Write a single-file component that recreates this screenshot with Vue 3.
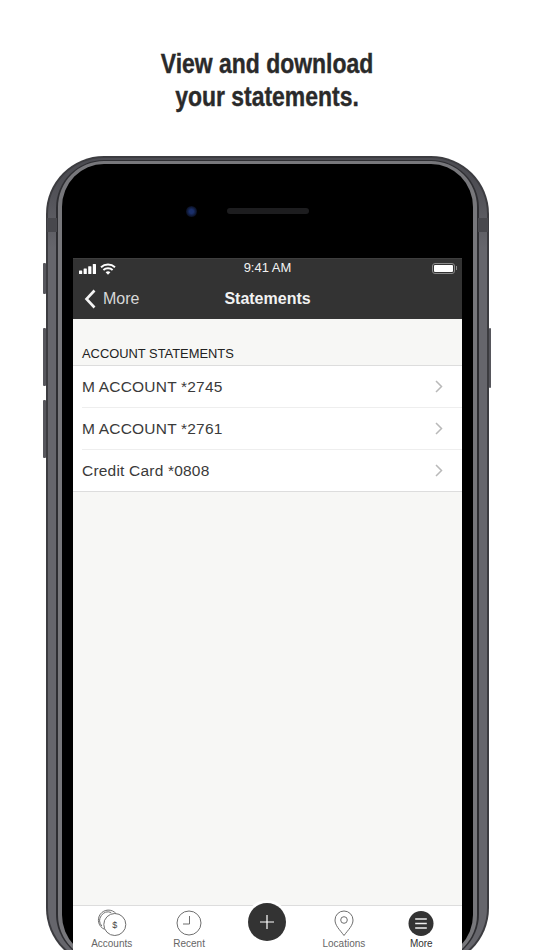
<script setup>
const rows = ['M ACCOUNT *2745', 'M ACCOUNT *2761', 'Credit Card *0808']
</script>

<template>
  <div class="page">
    <div class="title-wrap">
      <h1 class="title">View and download<br />your statements.</h1>
    </div>
    <div class="phone">
      <span class="side mute"></span>
      <span class="side volup"></span>
      <span class="side voldown"></span>
      <span class="side power"></span>
      <span class="antenna left"></span>
      <span class="antenna right"></span>
      <div class="band">
        <div class="groove">
          <div class="bezel">
            <div class="earpiece">
              <span class="camera"></span>
              <span class="speaker"></span>
            </div>
            <div class="screen">
              <div class="status">
                <div class="status-left">
                  <svg width="18" height="10" viewBox="0 0 18 10"><rect x="0" y="6.500" width="3.200" height="3.500" rx=".5" fill="#fff"/><rect x="4.600" y="4.500" width="3.200" height="5.500" rx=".5" fill="#fff"/><rect x="9.200" y="2.200" width="3.200" height="7.800" rx=".5" fill="#fff"/><rect x="13.800" y="0" width="3.200" height="10" rx=".5" fill="#fff"/></svg>
                  <svg width="16" height="12" viewBox="0 0 16 12" fill="none" stroke="#fff" stroke-width="2"><path d="M1 4.200C5 .6 11 .6 15 4.200"/><path d="M3.400 6.900C6 4.600 10 4.600 12.600 6.900"/><path d="M8 11.800 5.600 9.200C7 8 9 8 10.400 9.200Z" fill="#fff" stroke="none"/></svg>
                </div>
                <span class="clock">9:41 AM</span>
                <span class="battery"><i></i></span>
              </div>
              <div class="nav">
                <div class="back">
                  <svg width="12" height="20" viewBox="0 0 12 20" fill="none" stroke="#f4f4f4" stroke-width="2.600"><path d="M10.500 1.500 2.500 10l8 8.500"/></svg>
                  <span>More</span>
                </div>
                <span class="nav-title">Statements</span>
              </div>
              <div class="content">
                <div class="section">ACCOUNT STATEMENTS</div>
                <ul class="list">
                  <li v-for="row in rows" :key="row" class="row">
                    <span>{{ row }}</span>
                    <svg width="8" height="13" viewBox="0 0 8 13" fill="none" stroke="#b9b9b9" stroke-width="1.500"><path d="M1 1l5.500 5.500L1 12"/></svg>
                  </li>
                </ul>
              </div>
              <div class="tabs">
                <div class="tab">
                  <svg width="32" height="30" viewBox="0 0 32 30" fill="none" stroke="#6f6f6f" stroke-width="1"><path d="M8.500 20.300A10 10 0 1 1 20 4.600"/><path d="M5.800 17A8.500 8.500 0 0 1 15.200 3.500"/><circle cx="18.800" cy="15.500" r="11"/><text x="18.800" y="18.800" font-size="9" text-anchor="middle" fill="#444" stroke="none" font-family="Liberation Sans, sans-serif">$</text></svg>
                  <span>Accounts</span>
                </div>
                <div class="tab">
                  <svg width="30" height="30" viewBox="0 0 30 30" fill="none" stroke="#6f6f6f" stroke-width="1"><circle cx="15" cy="14" r="12"/><path d="M15.500 7v8H9"/></svg>
                  <span>Recent</span>
                </div>
                <div class="tab plus-slot">
                  <div class="plus">
                    <svg width="16" height="16" viewBox="0 0 16 16" stroke="#fff" stroke-width="1.200"><path d="M8 1v14M1 8h14"/></svg>
                  </div>
                </div>
                <div class="tab">
                  <svg width="30" height="30" viewBox="0 0 30 30" fill="none" stroke="#6f6f6f" stroke-width="1"><path d="M15 26.500C10.500 20.500 6 16.500 6 11a9 9 0 0 1 18 0C24 16.500 19.500 20.500 15 26.500Z"/><circle cx="15" cy="11" r="3.300"/></svg>
                  <span>Locations</span>
                </div>
                <div class="tab active">
                  <svg width="30" height="30" viewBox="0 0 30 30"><circle cx="15" cy="14.500" r="12.500" fill="#333"/><path d="M9.200 10h11.600M9.200 14.500h11.600M9.200 19h11.600" stroke="#eee" stroke-width="1.500"/></svg>
                  <span>More</span>
                </div>
              </div>
            </div>
          </div>
        </div>
      </div>
    </div>
  </div>
</template>

<style scoped>
.page {
  width: 534px;
  height: 950px;
  overflow: hidden;
  background: #fff;
  font-family: "Liberation Sans", Arial, sans-serif;
}
.title-wrap {
  height: 156px;
  box-sizing: border-box;
  padding-top: 48px;
}
.title {
  margin: 0;
  text-align: center;
  font-size: 27px;
  line-height: 33px;
  font-weight: 700;
  color: #2a2a2a;
  -webkit-text-stroke: 0.4px #2a2a2a;
  transform: scaleX(0.85);
}
.phone {
  position: relative;
  width: 443px;
  height: 810px;
  margin-left: 46px;
  box-sizing: border-box;
  padding: 2px;
  border-radius: 58px;
  background: #3c3c40;
}
.side {
  position: absolute;
  width: 3px;
  background: #56565c;
  border-radius: 1px;
}
.mute { left: -3px; top: 107px; height: 31px; }
.volup { left: -3px; top: 172px; height: 58px; }
.voldown { left: -3px; top: 244px; height: 58px; }
.power { right: -2px; top: 172px; height: 60px; width: 2px; }
.antenna {
  position: absolute;
  top: 62px;
  width: 10px;
  height: 14px;
  background: #48484d;
}
.antenna.left { left: 1px; }
.antenna.right { right: 1px; }
.band {
  height: 100%;
  box-sizing: border-box;
  padding: 2px 8px;
  border-radius: 56px;
  background: linear-gradient(#4c4c52 0, #4c4c52 20px, #66666c 90px);
}
.groove {
  height: 100%;
  box-sizing: border-box;
  padding: 1px 2px;
  border-radius: 48px;
  background: #2e2e32;
}
.bezel {
  height: 100%;
  box-sizing: border-box;
  padding: 0 11px;
  border: solid #77777b;
  border-width: 3px 4px;
  border-radius: 46px;
  background: #000;
  display: flex;
  flex-direction: column;
}
.earpiece {
  height: 94px;
  flex: none;
  display: flex;
  align-items: center;
  justify-content: center;
  gap: 30px;
  padding-left: 5px;
  box-sizing: border-box;
}
.camera {
  width: 11px;
  height: 11px;
  margin-left: -46px;
  border-radius: 50%;
  background: radial-gradient(circle, #1a2f6a 25%, #0a0f20 70%);
}
.speaker {
  width: 82px;
  height: 6px;
  border-radius: 3px;
  background: #1d1d1f;
}
.screen {
  flex: 1;
  display: flex;
  flex-direction: column;
  min-height: 0;
  background: #f7f7f5;
  border-top: 1px solid #3e3e3e;
}
.status {
  height: 19px;
  flex: none;
  display: flex;
  align-items: center;
  justify-content: space-between;
  position: relative;
  padding: 0 7px 0 6px;
  background: #333;
  color: #f2f2f2;
}
.status-left {
  display: flex;
  align-items: center;
  gap: 3px;
}
.clock {
  position: absolute;
  left: 0;
  right: 0;
  top: 1px;
  text-align: center;
  font-size: 13px;
}
.battery {
  position: relative;
  width: 23px;
  height: 11px;
  box-sizing: border-box;
  padding: 1px;
  border: 1px solid #8a8a8a;
  border-radius: 3px;
  display: block;
}
.battery::after {
  content: "";
  position: absolute;
  right: -3px;
  top: 2px;
  width: 1px;
  height: 4px;
  background: #8a8a8a;
}
.battery i {
  display: block;
  height: 100%;
  background: #fff;
  border-radius: 1px;
}
.nav {
  height: 41px;
  flex: none;
  display: flex;
  align-items: center;
  position: relative;
  padding-left: 11px;
  background: #333;
  color: #f2f2f2;
}
.back {
  display: flex;
  align-items: center;
  gap: 7px;
  font-size: 16px;
  color: #d8d8d8;
}
.nav-title {
  position: absolute;
  left: 0;
  right: 0;
  text-align: center;
  font-size: 16px;
  font-weight: 700;
}
.content {
  flex: 1;
  min-height: 0;
}
.section {
  padding: 27px 0 4px 9px;
  font-size: 12.900px;
  line-height: 15px;
  color: #222;
}
.list {
  list-style: none;
  margin: 0;
  padding: 0;
  background: #fff;
  border-top: 1px solid #ddd;
  border-bottom: 1px solid #ddd;
}
.row {
  height: 41px;
  margin-left: 9px;
  padding-right: 19px;
  display: flex;
  align-items: center;
  justify-content: space-between;
  font-size: 15.500px;
  letter-spacing: 0.2px;
  color: #3a3a3a;
  border-bottom: 1px solid #eee;
}
.row:last-child {
  border-bottom: 0;
}
.tabs {
  height: 53px;
  flex: none;
  box-sizing: border-box;
  padding-right: 2px;
  display: grid;
  grid-template-columns: repeat(5, 1fr);
  background: #fff;
  border-top: 1px solid #ddd;
}
.tab {
  display: flex;
  flex-direction: column;
  align-items: center;
  padding-top: 3px;
  font-size: 10px;
  line-height: 10px;
  color: #666;
}
.tab svg {
  display: block;
}
.tab.active {
  color: #333;
}
.plus-slot {
  position: relative;
}
.plus {
  position: absolute;
  left: 20px;
  top: -3px;
  width: 38px;
  height: 38px;
  border-radius: 50%;
  background: #333;
  display: flex;
  align-items: center;
  justify-content: center;
  box-shadow: 0 -1px 0 2px #fff;
}
</style>
